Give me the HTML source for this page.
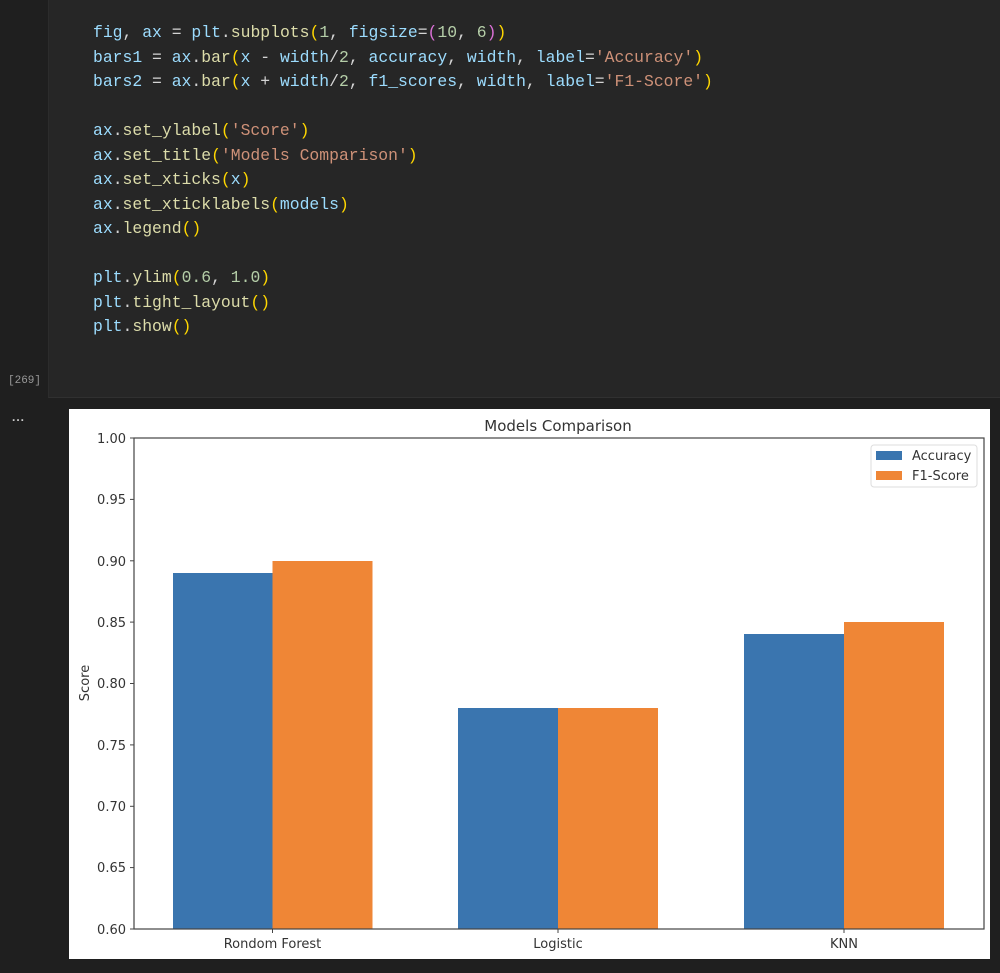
<!DOCTYPE html>
<html><head><style>
html,body{margin:0;padding:0;background:#1f1f1f;width:1000px;height:973px;overflow:hidden;position:relative}
.cell{position:absolute;left:48px;top:0;width:952px;height:397px;background:#262626;border-bottom:1px solid #303030;border-left:1px solid #2c2c2c}
pre{position:absolute;left:93px;top:21px;margin:0;font-family:"Liberation Mono",monospace;font-size:16.4px;line-height:24.5px;color:#d4d4d4}
.v{color:#9cdcfe}.f{color:#dcdcaa}.s{color:#ce9178}.n{color:#b5cea8}.p{color:#ffd700}.q{color:#da70d6}
.cnt{position:absolute;left:8px;top:375px;font-family:"Liberation Mono",monospace;font-size:11px;color:#9a9a9a}
.dots{position:absolute;left:12px;top:410px;color:#ccc;font:bold 12px "Liberation Sans",sans-serif;letter-spacing:1px}
svg{position:absolute;left:0;top:0}
</style></head><body>
<div class="cell"></div>
<pre><span class="v">fig</span>, <span class="v">ax</span> = <span class="v">plt</span>.<span class="f">subplots</span><span class="p">(</span><span class="n">1</span>, <span class="v">figsize</span>=<span class="q">(</span><span class="n">10</span>, <span class="n">6</span><span class="q">)</span><span class="p">)</span>
<span class="v">bars1</span> = <span class="v">ax</span>.<span class="f">bar</span><span class="p">(</span><span class="v">x</span> - <span class="v">width</span>/<span class="n">2</span>, <span class="v">accuracy</span>, <span class="v">width</span>, <span class="v">label</span>=<span class="s">'Accuracy'</span><span class="p">)</span>
<span class="v">bars2</span> = <span class="v">ax</span>.<span class="f">bar</span><span class="p">(</span><span class="v">x</span> + <span class="v">width</span>/<span class="n">2</span>, <span class="v">f1_scores</span>, <span class="v">width</span>, <span class="v">label</span>=<span class="s">'F1-Score'</span><span class="p">)</span>

<span class="v">ax</span>.<span class="f">set_ylabel</span><span class="p">(</span><span class="s">'Score'</span><span class="p">)</span>
<span class="v">ax</span>.<span class="f">set_title</span><span class="p">(</span><span class="s">'Models Comparison'</span><span class="p">)</span>
<span class="v">ax</span>.<span class="f">set_xticks</span><span class="p">(</span><span class="v">x</span><span class="p">)</span>
<span class="v">ax</span>.<span class="f">set_xticklabels</span><span class="p">(</span><span class="v">models</span><span class="p">)</span>
<span class="v">ax</span>.<span class="f">legend</span><span class="p">()</span>

<span class="v">plt</span>.<span class="f">ylim</span><span class="p">(</span><span class="n">0.6</span>, <span class="n">1.0</span><span class="p">)</span>
<span class="v">plt</span>.<span class="f">tight_layout</span><span class="p">()</span>
<span class="v">plt</span>.<span class="f">show</span><span class="p">()</span></pre>
<div class="cnt">[269]</div>
<div class="dots">...</div>
<svg width="1000" height="973" font-family="DejaVu Sans, sans-serif">
<rect x="69" y="409" width="921" height="550" fill="#fff"/>
<text x="558" y="431" font-size="15" fill="#333" text-anchor="middle">Models Comparison</text>
<g fill="#3a75af">
<rect x="173" y="573" width="99.5" height="356"/>
<rect x="458" y="708" width="100" height="221"/>
<rect x="744" y="634" width="100" height="295"/>
</g>
<g fill="#ef8636">
<rect x="272.5" y="561" width="100" height="368"/>
<rect x="558" y="708" width="100" height="221"/>
<rect x="844" y="622" width="100" height="307"/>
</g>
<rect x="134" y="438" width="850" height="491" fill="none" stroke="#444" stroke-width="1.2"/>
<g stroke="#444" stroke-width="1">
<line x1="130" x2="134" y1="438" y2="438"/><line x1="130" x2="134" y1="499.4" y2="499.4"/><line x1="130" x2="134" y1="560.8" y2="560.8"/><line x1="130" x2="134" y1="622.1" y2="622.1"/><line x1="130" x2="134" y1="683.5" y2="683.5"/><line x1="130" x2="134" y1="744.9" y2="744.9"/><line x1="130" x2="134" y1="806.3" y2="806.3"/><line x1="130" x2="134" y1="867.6" y2="867.6"/><line x1="130" x2="134" y1="929" y2="929"/>
<line x1="272.5" x2="272.5" y1="929" y2="933"/><line x1="558" x2="558" y1="929" y2="933"/><line x1="844" x2="844" y1="929" y2="933"/>
</g>
<g font-size="13" fill="#333" text-anchor="end">
<text x="126" y="443">1.00</text><text x="126" y="504">0.95</text><text x="126" y="566">0.90</text><text x="126" y="627">0.85</text><text x="126" y="688">0.80</text><text x="126" y="750">0.75</text><text x="126" y="811">0.70</text><text x="126" y="872">0.65</text><text x="126" y="934">0.60</text>
</g>
<g font-size="13" fill="#333" text-anchor="middle">
<text x="272.5" y="948">Rondom Forest</text><text x="558" y="948">Logistic</text><text x="844" y="948">KNN</text>
</g>
<text transform="translate(89,683) rotate(-90)" font-size="13" fill="#333" text-anchor="middle">Score</text>
<rect x="871" y="445" width="106" height="42" rx="3" fill="#fff" stroke="#ddd"/>
<rect x="876" y="451" width="26" height="9" fill="#3a75af"/>
<rect x="876" y="471" width="26" height="9" fill="#ef8636"/>
<text x="912" y="460" font-size="13" fill="#333">Accuracy</text>
<text x="912" y="480" font-size="13" fill="#333">F1-Score</text>
</svg>
</body></html>
